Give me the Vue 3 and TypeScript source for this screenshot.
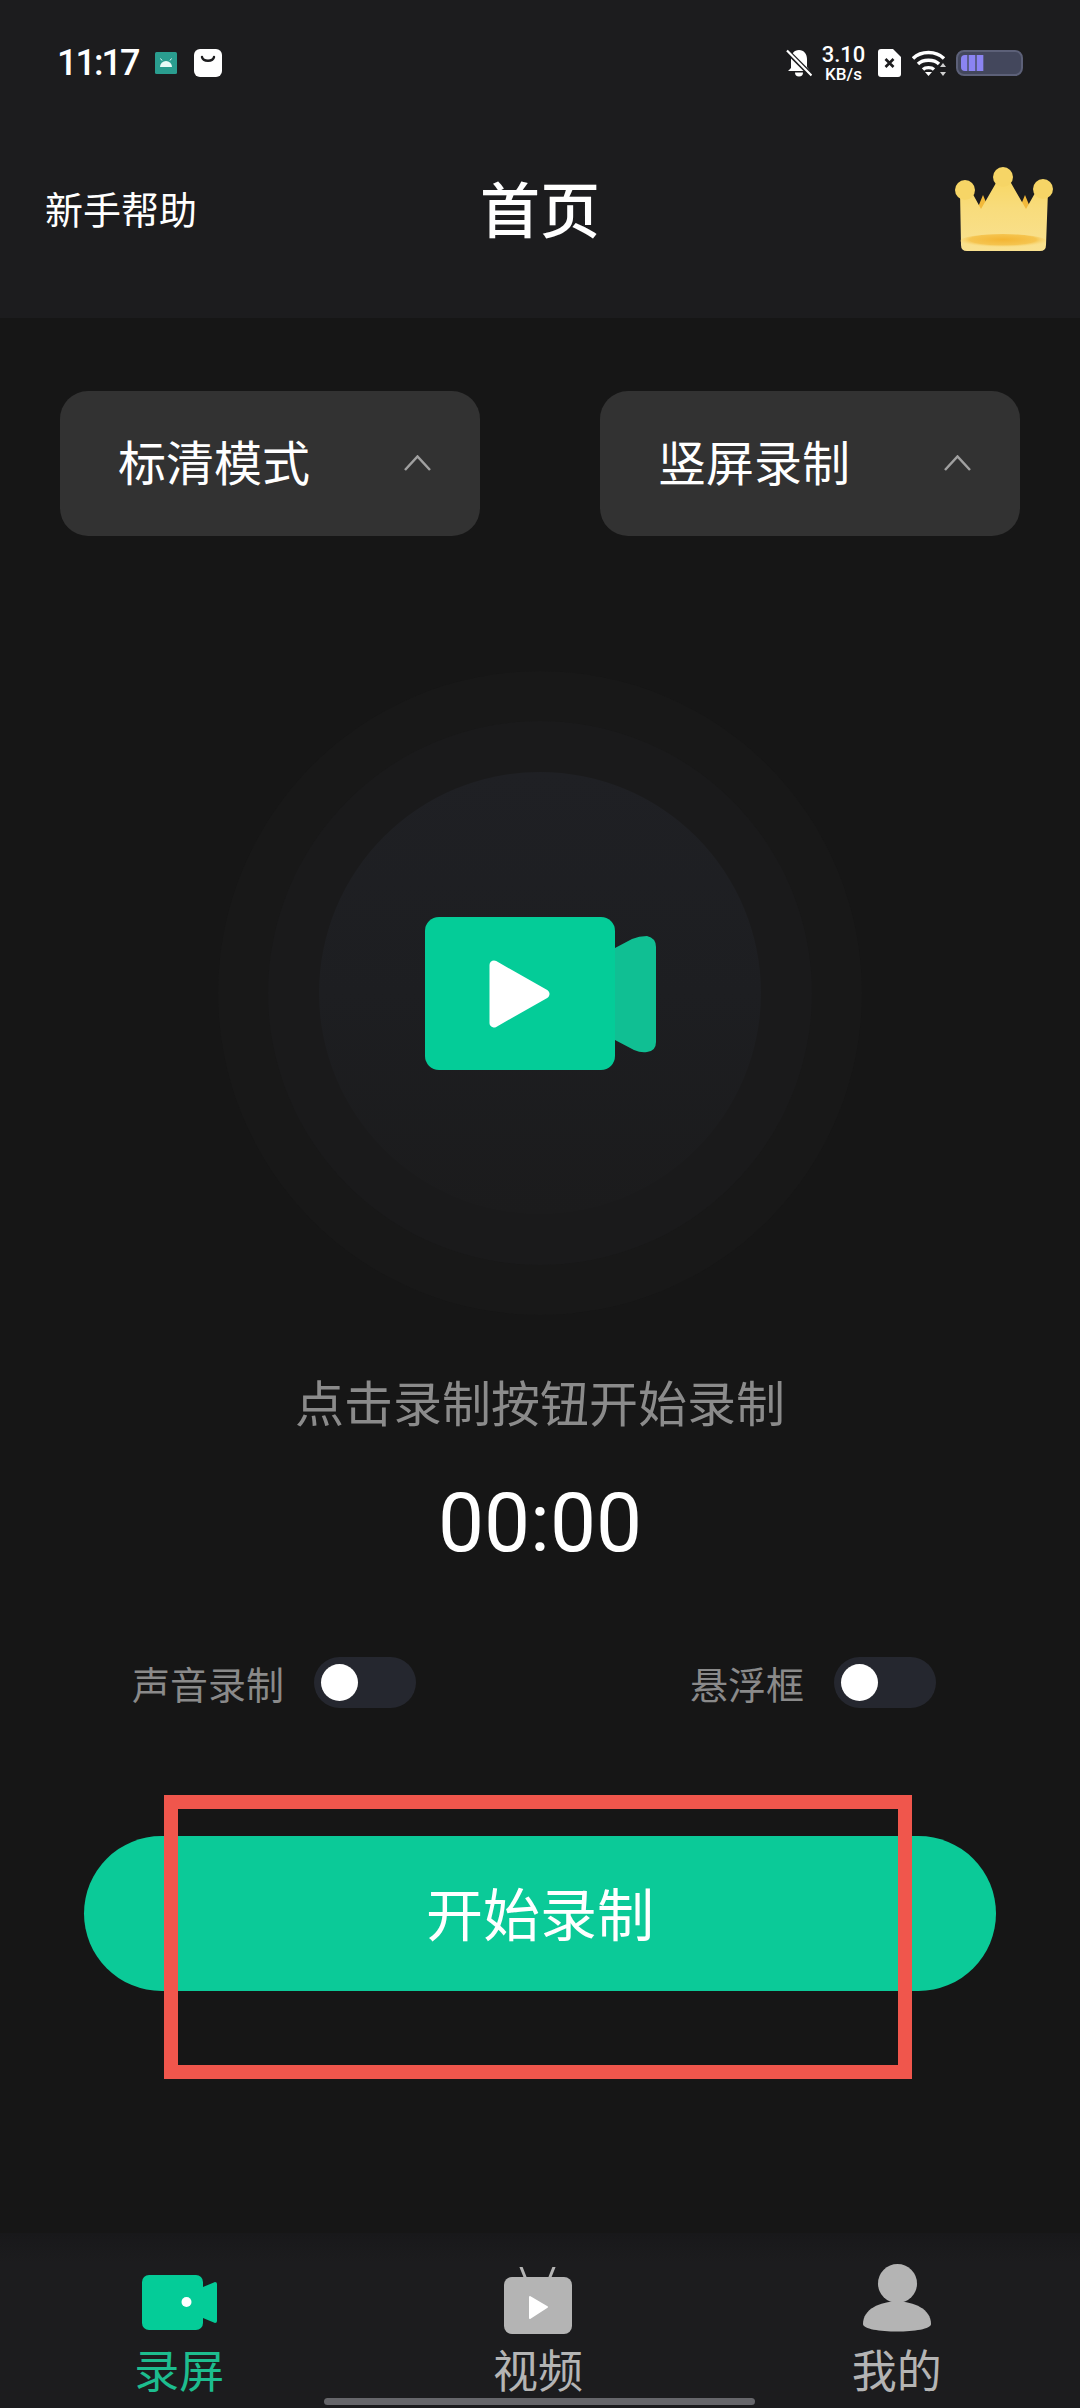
<script setup lang="ts">
const selects = ['标清模式', '竖屏录制'];
const toggles = ['声音录制', '悬浮框'];
</script>

<template>
  <div class="page">
    <header class="top">
      <div class="status">
        <div class="status-left">
          <span class="time">11:17</span>
          <svg class="android" viewBox="0 0 22 22">
            <rect width="22" height="22" rx="1.5" fill="#2a9d8f" />
            <path d="M5 15a6 6 0 0 1 12 0z" fill="#e8fbf7" />
            <path d="M7 8.500 5.500 6.500M15 8.500l1.500-2" stroke="#e8fbf7" stroke-width="1" />
          </svg>
          <svg class="bag" viewBox="0 0 28 28">
            <rect width="28" height="28" rx="6" fill="#fff" />
            <path d="M8 8c1 5 11 5 12 0" fill="none" stroke="#1c1c1e" stroke-width="2.400" stroke-linecap="round" />
          </svg>
        </div>
        <div class="status-right">
          <svg class="bell" viewBox="0 0 26 28">
            <path d="M13 1c5 0 8 4 8 9v8l3 4H2l3-3v-9c0-5 3-9 8-9z" fill="#fff" />
            <path d="M9 23.500a4 4 0 0 0 8 0z" fill="#fff" />
            <path d="M0 1 26 27" stroke="#1c1c1e" stroke-width="5" />
            <path d="M1 1.500 25.500 26.500" stroke="#fff" stroke-width="2.200" />
          </svg>
          <div class="speed">
            <span class="speed-num">3.10</span>
            <span class="speed-unit">KB/s</span>
          </div>
          <svg class="sim" viewBox="0 0 23 28">
            <path d="M3 0h12l8 8v17a3 3 0 0 1-3 3H3a3 3 0 0 1-3-3V3a3 3 0 0 1 3-3z" fill="#fff" />
            <path d="m7.500 10 8 8m0-8-8 8" stroke="#1c1c1e" stroke-width="2.600" />
          </svg>
          <svg class="wifi" viewBox="0 0 35 26">
            <g fill="none" stroke="#fff" stroke-width="3.400">
              <path d="M1 8.500c8-8 23-8 31 0" />
              <path d="M6 14c5-5 16-5 21 0" />
              <path d="M11 19.500c2.500-2.500 8.500-2.500 11 0" />
            </g>
            <path d="m16.500 26-3.500-4h7z" fill="#fff" />
            <path d="m31 13 3 4h-6zM31 26l3-4h-6z" fill="#d0d0d0" />
          </svg>
          <div class="battery">
            <div class="battery-fill"></div>
          </div>
        </div>
      </div>
      <div class="nav">
        <span class="help">新手帮助</span>
        <h1 class="title">首页</h1>
        <svg class="crown" viewBox="0 0 99 85">
          <defs>
            <linearGradient id="crownFill" x1="0" y1="0" x2="0" y2="1">
              <stop offset="0" stop-color="#f8d65f" />
              <stop offset="0.45" stop-color="#f8dc7c" />
              <stop offset="1" stop-color="#f9e190" />
            </linearGradient>
            <radialGradient id="crownBand" cx="0.5" cy="0.4" r="0.55">
              <stop offset="0" stop-color="#f3b533" />
              <stop offset="0.7" stop-color="#f5c44f" />
              <stop offset="1" stop-color="#f9dc80" stop-opacity="0" />
            </radialGradient>
          </defs>
          <path d="M21 45 28 28l7 17zM63 45l7-17 7 17z" fill="#f2b93a" />
          <path d="M5 24 14 20 26 42 41 16 48 6 56 16 71 42 84 19 93 24 91 78q0 6-6 6H12q-6 0-6-6z" fill="url(#crownFill)" />
          <ellipse cx="48" cy="74" rx="43" ry="7" fill="url(#crownBand)" />
          <circle cx="10" cy="23" r="10" fill="#f6d566" />
          <circle cx="48" cy="10" r="10" fill="#f6d566" />
          <circle cx="88" cy="22" r="10" fill="#f6d566" />
        </svg>
      </div>
    </header>

    <main class="main">
      <div class="selects">
        <div v-for="item in selects" :key="item" class="select">
          <span class="select-text">{{ item }}</span>
          <svg class="chevron" viewBox="0 0 27 16">
            <path d="M1 15 13.500 1.500 26 15" fill="none" stroke="#a0a0a0" stroke-width="2.500" />
          </svg>
        </div>
      </div>

      <div class="ring ring-outer">
        <div class="ring ring-mid">
          <div class="ring ring-inner">
            <svg class="camera" viewBox="0 0 231 153">
              <path d="M190 31 207 22q7-3 15-3 9 2 9 11v95q0 9-9 10-6 1-13-2l-19-10z" fill="#10bf93" />
              <rect width="190" height="153" rx="14" fill="#04cc98" />
              <path d="M69 48 120 77 69 106z" fill="#fff" stroke="#fff" stroke-width="9" stroke-linejoin="round" />
            </svg>
          </div>
        </div>
      </div>

      <p class="hint">点击录制按钮开始录制</p>
      <div class="timer">00:00</div>

      <div class="toggles">
        <div v-for="item in toggles" :key="item" class="toggle-row">
          <span class="toggle-label">{{ item }}</span>
          <div class="toggle"><div class="knob"></div></div>
        </div>
      </div>

      <div class="start-wrap">
        <button class="start">开始录制</button>
        <div class="highlight"></div>
      </div>
    </main>

    <nav class="tabs">
      <div class="tab active">
        <div class="tab-icon">
          <svg class="icon-rec" viewBox="0 0 75 55">
            <path d="M61 12 73 7q2 0 2 2v37q0 2-2 2L61 43z" fill="#04cc98" />
            <rect width="61" height="55" rx="7" fill="#04cc98" />
            <ellipse cx="44.500" cy="27" rx="5" ry="5" fill="#fff" />
          </svg>
        </div>
        <span>录屏</span>
      </div>
      <div class="tab">
        <div class="tab-icon">
          <svg class="icon-tv" viewBox="0 0 68 67">
            <path d="M17 0l4 10M50 0l-4 10" stroke="#b4b4b4" stroke-width="3" stroke-linecap="round" />
            <rect y="10" width="68" height="57" rx="8" fill="#b4b4b4" />
            <path d="M26 30 43 40 26 51z" fill="#fff" stroke="#fff" stroke-width="2" stroke-linejoin="round" />
          </svg>
        </div>
        <span>视频</span>
      </div>
      <div class="tab">
        <div class="tab-icon">
          <svg class="icon-user" viewBox="0 0 68 70">
            <ellipse cx="34.500" cy="19.500" rx="19.500" ry="19.500" fill="#b4b4b4" />
            <path d="M0 60c0-30 68-30 68 0 0 10-68 10-68 0z" fill="#b4b4b4" />
          </svg>
        </div>
        <span>我的</span>
      </div>
      <div class="home-bar"></div>
    </nav>
  </div>
</template>

<style>
html,
body {
  margin: 0;
  background: #161616;
}
</style>

<style scoped>
.page {
  width: 1080px;
  height: 2408px;
  display: flex;
  flex-direction: column;
  overflow: hidden;
  background: #161616;
  color: #fff;
  font-family: "Noto Sans CJK SC", "Noto Sans", sans-serif;
}

.top {
  height: 318px;
  flex: none;
  background: #1c1c1e;
}

.status {
  height: 126px;
  display: flex;
  align-items: center;
  justify-content: space-between;
  padding: 0 57px 0 57px;
}

.status-left,
.status-right {
  display: flex;
  align-items: center;
}

.time {
  font-family: Roboto, sans-serif;
  font-size: 36px;
  font-weight: 500;
  letter-spacing: -2px;
  width: 98px;
}

.android {
  width: 22px;
  height: 22px;
}

.bag {
  width: 28px;
  height: 28px;
  margin-left: 17px;
}

.bell {
  width: 26px;
  height: 28px;
}

.speed {
  display: flex;
  flex-direction: column;
  align-items: center;
  font-family: Roboto, sans-serif;
  font-weight: 500;
  margin-left: 11px;
  width: 41px;
}

.speed-num {
  font-size: 22px;
  line-height: 21px;
}

.speed-unit {
  font-size: 17px;
  line-height: 18px;
}

.sim {
  width: 23px;
  height: 28px;
  margin-left: 14px;
}

.wifi {
  width: 35px;
  height: 26px;
  margin-left: 11px;
}

.battery {
  width: 67px;
  height: 26px;
  box-sizing: border-box;
  margin-left: 9px;
  padding: 3px;
  border: 2px solid #5c6078;
  border-radius: 8px;
  background: #43475c;
}

.battery-fill {
  width: 23px;
  height: 100%;
  border-radius: 4px 0 0 4px;
  background: repeating-linear-gradient(90deg, #8b84f2 0 6px, #5a5c8c 6px 8px);
}

.nav {
  height: 170px;
  display: flex;
  align-items: center;
  justify-content: space-between;
  position: relative;
  padding: 0 26px 0 45px;
}

.help {
  font-size: 38px;
  line-height: 50px;
  padding-bottom: 6px;
}

.title {
  position: absolute;
  left: 0;
  right: 0;
  margin: 0;
  padding-bottom: 8px;
  text-align: center;
  font-size: 60px;
  font-weight: 500;
  line-height: 80px;
  pointer-events: none;
}

.crown {
  width: 99px;
  height: 85px;
  margin-bottom: 4px;
}

.main {
  flex: 1;
  display: flex;
  flex-direction: column;
  align-items: center;
}

.selects {
  width: 100%;
  box-sizing: border-box;
  margin-top: 73px;
  padding: 0 60px;
  display: flex;
  justify-content: space-between;
}

.select {
  width: 420px;
  height: 145px;
  box-sizing: border-box;
  padding: 0 49px 0 58px;
  display: flex;
  align-items: center;
  justify-content: space-between;
  border-radius: 28px;
  background: #323232;
  font-size: 48px;
}

.select-text {
  padding-bottom: 8px;
}

.chevron {
  width: 27px;
  height: 16px;
  margin-bottom: 2px;
}

.ring {
  display: flex;
  align-items: center;
  justify-content: center;
  border-radius: 50%;
}

.ring-outer {
  width: 644px;
  height: 644px;
  margin-top: 135px;
  background: #181818;
}

.ring-mid {
  width: 544px;
  height: 544px;
  background: #1a1a1b;
}

.ring-inner {
  width: 442px;
  height: 442px;
  background: linear-gradient(180deg, #1f2024 0%, #1d1e21 50%, #1b1b1c 100%);
}

.camera {
  width: 231px;
  height: 153px;
}

.hint {
  margin: 56px 0 0;
  font-size: 49px;
  line-height: 60px;
  color: #8b8b8b;
}

.timer {
  margin-top: 42px;
  font-family: Roboto, sans-serif;
  font-size: 82px;
  line-height: 100px;
}

.toggles {
  width: 100%;
  box-sizing: border-box;
  margin-top: 82px;
  padding: 0 144px 0 132px;
  display: flex;
  justify-content: space-between;
}

.toggle-row {
  display: flex;
  align-items: center;
  gap: 30px;
}

.toggle-label {
  font-size: 38px;
  color: #8a8a8a;
}

.toggle {
  width: 102px;
  height: 51px;
  box-sizing: border-box;
  padding: 7px;
  border-radius: 26px;
  background: #25272f;
}

.knob {
  width: 37px;
  height: 37px;
  border-radius: 50%;
  background: #fff;
}

.start-wrap {
  position: relative;
  margin-top: 126px;
}

.start {
  display: block;
  width: 912px;
  height: 155px;
  padding: 0 0 5px;
  border: none;
  border-radius: 78px;
  background: #0bca98;
  color: #fff;
  font-family: inherit;
  font-size: 57px;
}

.highlight {
  position: absolute;
  left: 80px;
  top: -41px;
  width: 748px;
  height: 284px;
  box-sizing: border-box;
  border: 14px solid #f0564c;
  pointer-events: none;
}

.tabs {
  position: relative;
  height: 175px;
  flex: none;
  box-sizing: border-box;
  padding: 31px 4px 0 0;
  display: grid;
  grid-template-columns: repeat(3, 1fr);
  background: linear-gradient(180deg, #18181a 0, #1c1c1e 30px);
}

.tab {
  display: flex;
  flex-direction: column;
  align-items: center;
  color: #b4b4b4;
  font-size: 45px;
  line-height: 50px;
}

.tab.active {
  color: #1dbd8f;
}

.tab-icon {
  height: 70px;
  margin-bottom: 10px;
  display: flex;
  align-items: flex-end;
}

.icon-rec {
  width: 75px;
  height: 55px;
  margin-bottom: 4px;
}

.icon-tv {
  width: 68px;
  height: 67px;
}

.icon-user {
  width: 68px;
  height: 70px;
}

.home-bar {
  position: absolute;
  left: 324px;
  bottom: 3px;
  width: 431px;
  height: 7px;
  border-radius: 4px;
  background: #66666a;
}
</style>
